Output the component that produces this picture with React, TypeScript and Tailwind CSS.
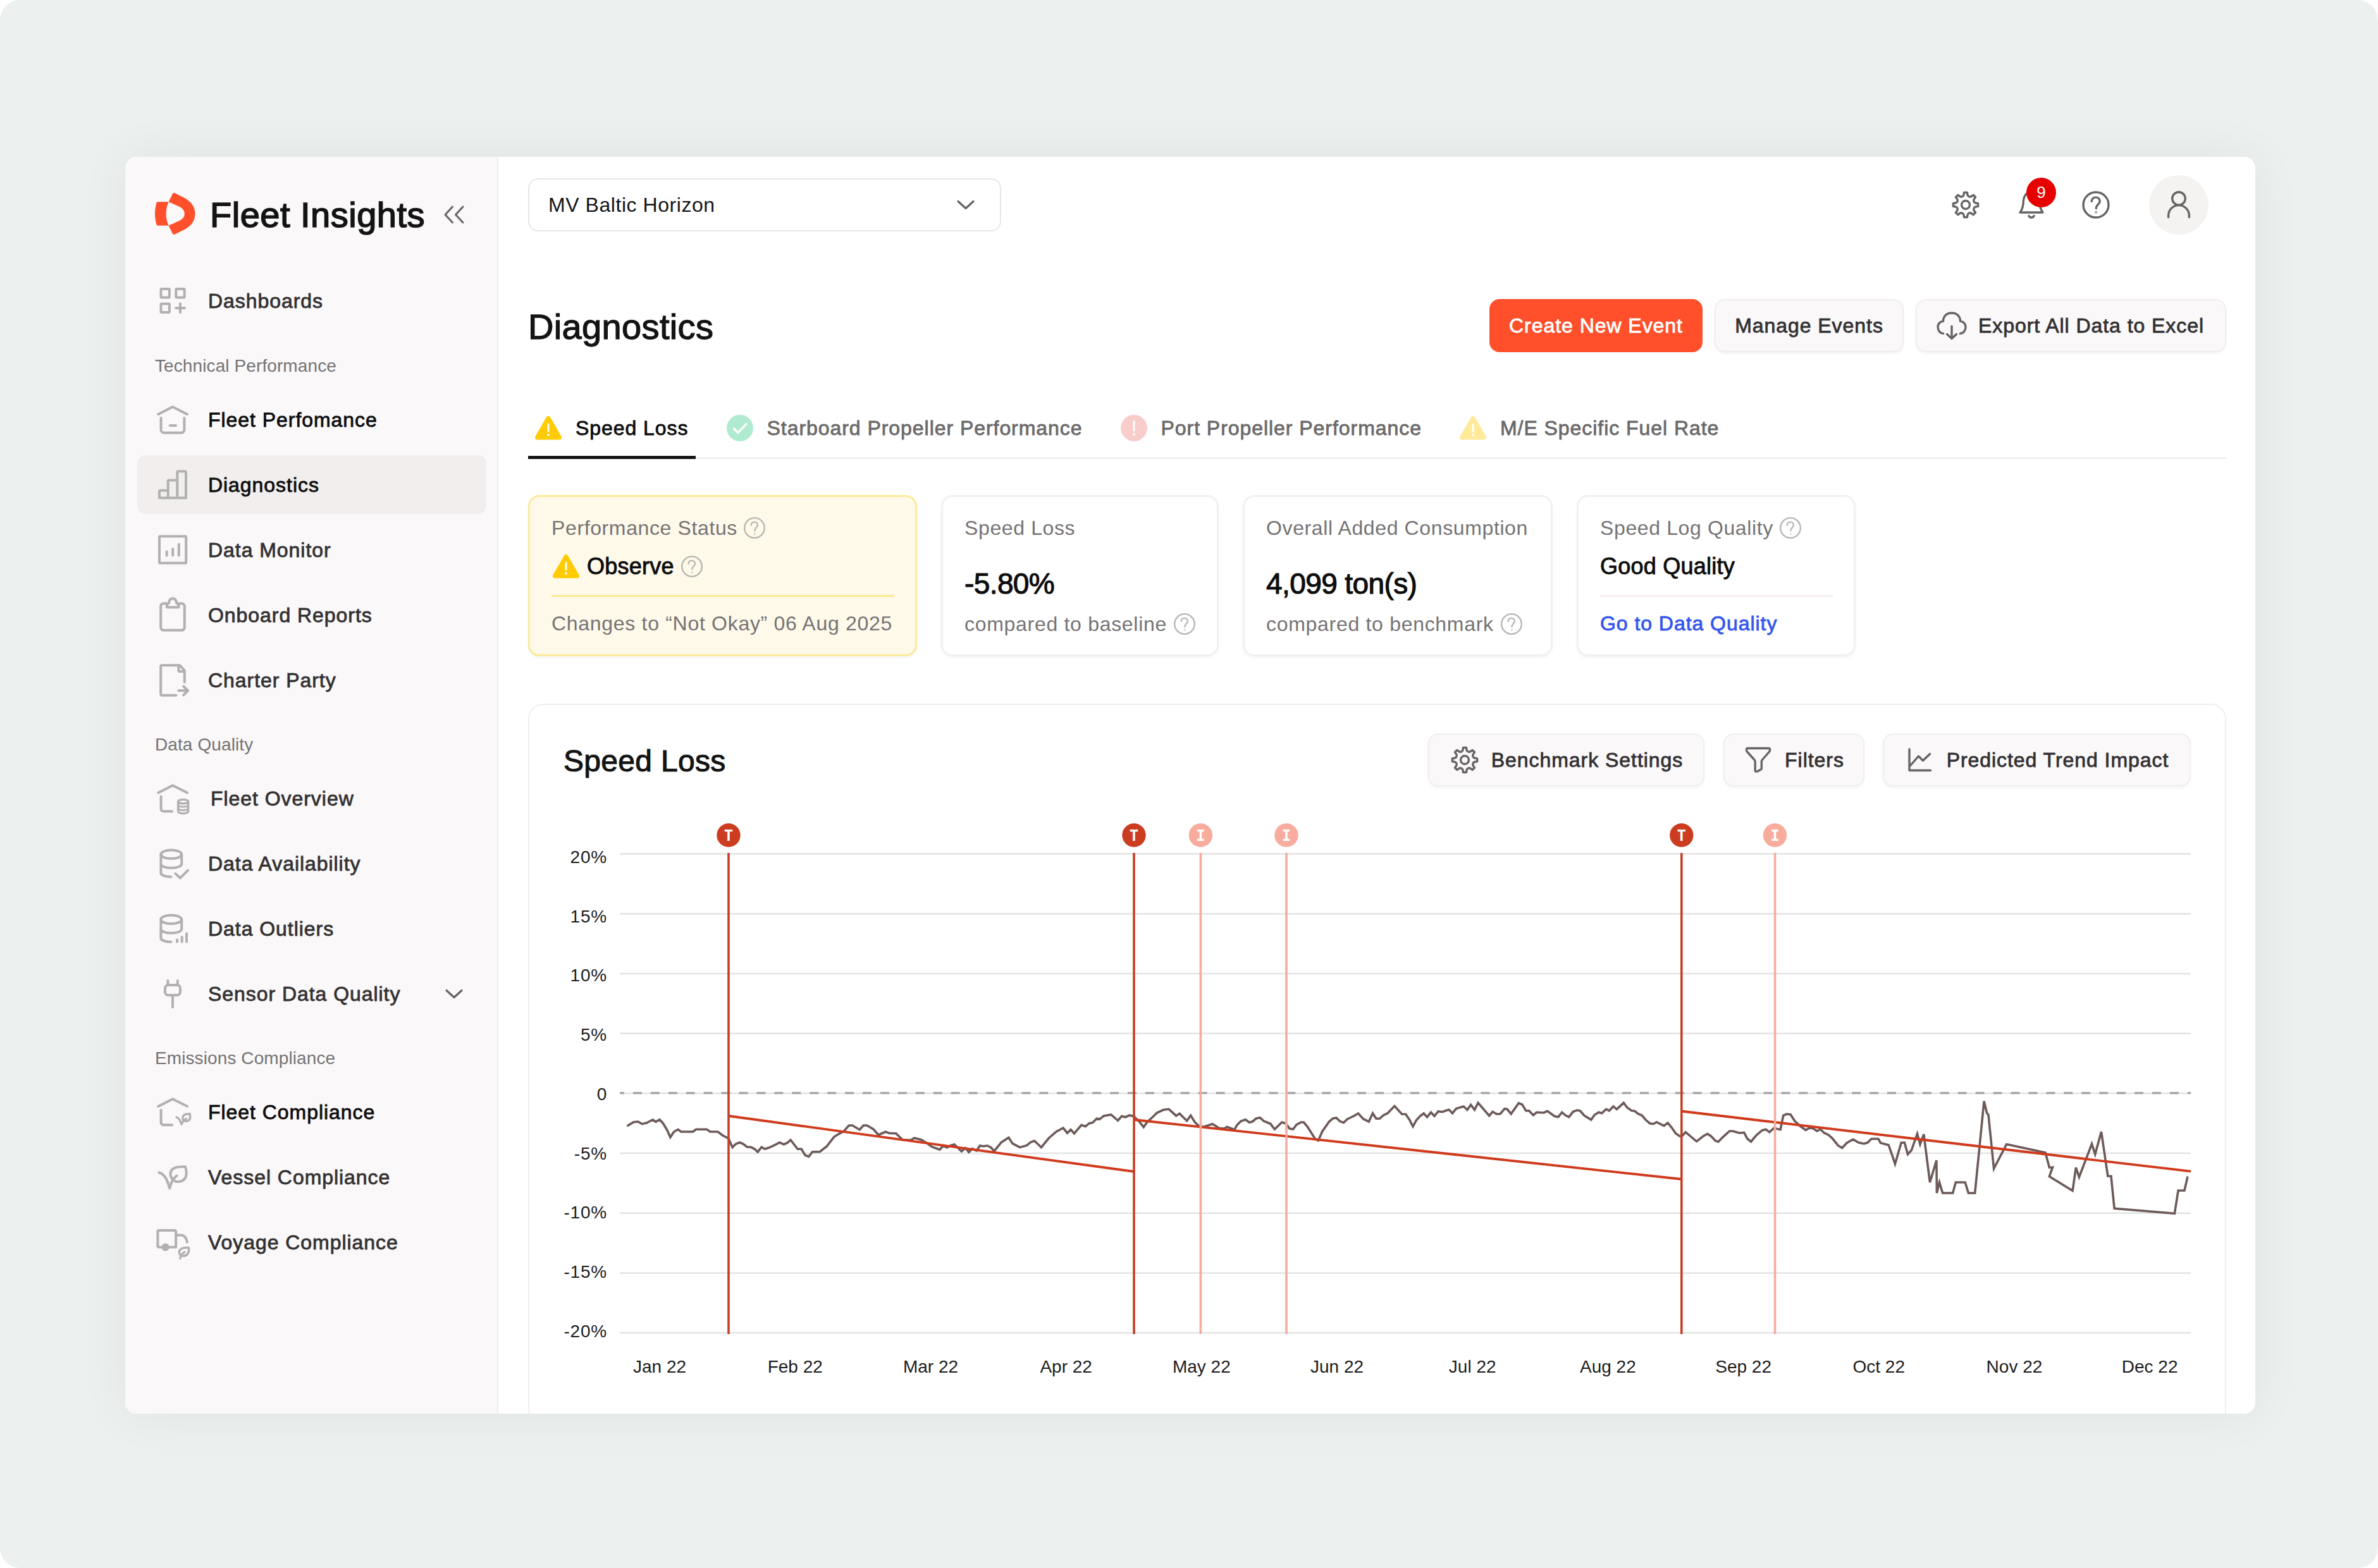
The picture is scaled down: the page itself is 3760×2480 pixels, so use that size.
import React from "react";

type IconProps = { className?: string };

/* ---------- text styles ---------- */

const medium = "[-webkit-text-stroke:0.8px] tracking-[0.95px] text-[32px]";
const regular = "text-[32px] tracking-[0.62px]";

/* ---------- sidebar icons ---------- */

function NavSvg({ children }: { children: React.ReactNode }) {
  return (
    <svg
      viewBox="0 0 64 64"
      className="h-[64px] w-[64px] shrink-0"
      fill="none"
      stroke="#b3b0b1"
      strokeWidth="4"
      strokeLinecap="round"
      strokeLinejoin="round"
    >
      {children}
    </svg>
  );
}

const DashboardsIcon = () => (
  <NavSvg>
    <rect x="13.5" y="13" width="13.4" height="13.4" rx="1" />
    <rect x="37.3" y="13" width="13.4" height="13.4" rx="1" />
    <rect x="13.5" y="36.6" width="13.4" height="13.4" rx="1" />
    <path d="M37.2 43.2H51M44 36.3V50.2" />
  </NavSvg>
);

const HouseIcon = () => (
  <NavSvg>
    <path d="M9.3 23.2L32 11.5L55 23.2" />
    <path d="M13.6 29V47.8a4.6 4.6 0 0 0 4.6 4.6H45.8a4.6 4.6 0 0 0 4.6-4.6V29" />
    <path d="M27.8 41H37" />
  </NavSvg>
);

const BarsIcon = () => (
  <NavSvg>
    <path d="M11 52.6V42.2a1.5 1.5 0 0 1 1.5-1.5H24.7M24.7 52V26a1.5 1.5 0 0 1 1.5-1.5H39.3M39.3 52V12a1.5 1.5 0 0 1 1.5-1.5H51.5a1.5 1.5 0 0 1 1.5 1.5V52.6H11" />
  </NavSvg>
);

const MonitorIcon = () => (
  <NavSvg>
    <rect x="11" y="10.3" width="42.2" height="42.2" rx="1" />
    <path d="M22.6 34.5V40.5M32.2 30V40.5M41.8 22.8V40.5" />
  </NavSvg>
);

const ClipboardIcon = () => (
  <NavSvg>
    <path d="M22.6 13.6H17.6a4.4 4.4 0 0 0-4.4 4.4V51.4a4.4 4.4 0 0 0 4.4 4.4H46.4a4.4 4.4 0 0 0 4.4-4.4V18a4.4 4.4 0 0 0-4.4-4.4H41.6" />
    <path d="M22.8 19.6V16.6c0-2 1.4-3.2 3.2-3.6c.6-4.900 2.600-7.400 6.100-7.400s5.500 2.500 6.100 7.400c1.800.4 3.200 1.600 3.200 3.600V19.600z" />
  </NavSvg>
);

const DocArrowIcon = () => (
  <NavSvg>
    <path d="M37.500 55.800H15a1.800 1.800 0 0 1-1.800-1.800V10.100a1.800 1.800 0 0 1 1.800-1.800H43.400L50.800 16.500V35" />
    <path d="M41.400 9.500V16a2 2 0 0 0 2 2H50" />
    <path d="M41.400 48.300H56M49.200 41.500L56.200 48.300L49.200 55.300" />
  </NavSvg>
);

const HouseDbIcon = () => (
  <NavSvg>
    <path d="M9.300 22.800L32 11.200L55 22.800" />
    <path d="M13.600 28.800V48.500a3.700 3.700 0 0 0 3.700 3.700H31" />
    <ellipse cx="48.600" cy="36.800" rx="8" ry="3.200" strokeWidth="3.400" />
    <path d="M40.600 36.800V52c0 2 3.600 3.600 8 3.600s8-1.600 8-3.600V36.800" strokeWidth="3.400" />
    <path d="M40.600 42c0 2 3.600 3.200 8 3.200s8-1.200 8-3.200M40.600 47.300c0 2 3.600 3.200 8 3.200s8-1.200 8-3.200" strokeWidth="2.800" />
  </NavSvg>
);

const DbBody = () => (
  <>
    <ellipse cx="29.800" cy="17.300" rx="16.400" ry="6.800" />
    <path d="M46.200 17.300V32.500c0 3.600-7 6.300-16.400 6.300s-16.400-2.700-16.400-6.300" />
    <path d="M13.400 17.300V46.500c0 3.400 6 6 16 6.300" />
  </>
);

const DbCheckIcon = () => (
  <NavSvg>
    <DbBody />
    <path d="M36.400 47.600L43.800 54.800L56 42.700" />
  </NavSvg>
);

const DbBarsIcon = () => (
  <NavSvg>
    <DbBody />
    <path d="M39 49.500V52.500M46.700 45V52.500M54 39.500V52.500" />
  </NavSvg>
);

const PlugIcon = () => (
  <NavSvg>
    <rect x="20" y="18" width="24" height="16" rx="5" />
    <path d="M24.400 11V17M39.800 11V17M32 34.500V53" />
  </NavSvg>
);

const HouseLeafIcon = () => (
  <NavSvg>
    <path d="M9.300 22.800L32 11.200L55 22.800" />
    <path d="M13.600 28.800V48.500a3.700 3.700 0 0 0 3.700 3.700H31" />
    <path d="M38 40C42 41.500 44.500 46 46 51.200C47.500 47 50 44 53.500 42.500" strokeWidth="3.400" />
    <path d="M59.200 34.800C53 34.500 48.500 36 47.800 40.500C47.500 44.500 51 47 55 46.200C59.500 45 60.500 41 59.200 34.800Z" strokeWidth="3.400" />
  </NavSvg>
);

const LeafIcon = () => (
  <NavSvg>
    <path d="M10.500 24.500C20 27 24 38 27.300 49.500C29 41 33 34 38.500 29.500" />
    <path d="M52 15.300C42 15 33 16 29.800 21.500C26.500 28 30 35.500 36 38.300C43 40.500 49.500 38 52.500 32C54.300 27.500 53.600 20.500 52 15.300Z" />
  </NavSvg>
);

const TruckLeafIcon = () => (
  <NavSvg>
    <path d="M15 39.400H10a1.600 1.600 0 0 1-1.600-1.600V14.700A1.600 1.600 0 0 1 10 13.100H35.500A1.600 1.600 0 0 1 37.100 14.700V39.400H26" />
    <path d="M37.500 20.500H45.500C51.500 20.500 53.500 25.500 55 31.500" />
    <circle cx="20.600" cy="39.600" r="4.200" fill="#b3b0b1" />
    <path d="M57.300 40.300C50 39.800 43.500 41.500 42.300 46.500C41.800 51 45.500 54 50 53.500C56 52.300 58.500 47.500 57.300 40.300ZM43.800 57.500C45 52.500 47.500 49 51 47.300" strokeWidth="3.400" />
  </NavSvg>
);

/* ---------- line icons ---------- */

function LineSvg({
  children,
  className = "",
  width = 3.4,
}: {
  children: React.ReactNode;
  className?: string;
  width?: number;
}) {
  return (
    <svg
      viewBox="-24 -24 48 48"
      className={`h-[48px] w-[48px] shrink-0 overflow-visible ${className}`}
      fill="none"
      stroke="#666464"
      strokeWidth={width}
      strokeLinecap="round"
      strokeLinejoin="round"
    >
      {children}
    </svg>
  );
}

/** Eight-tooth cog outline; valleys are quadratic curves between tooth bases. */
function cogPath() {
  const at = (deg: number, r: number) => {
    const a = (deg * Math.PI) / 180;
    return `${(Math.sin(a) * r).toFixed(2)} ${(-Math.cos(a) * r).toFixed(2)}`;
  };
  let d = "";
  for (let k = 0; k < 8; k++) {
    const a = k * 45;
    d += `${k === 0 ? "M" : "L"}${at(a - 7, 19.8)}L${at(a + 7, 19.8)}L${at(a + 10.5, 16.2)}`;
    d += `Q${at(a + 22.5, 12.2)} ${at(a + 34.5, 16.2)}`;
  }
  return d + "Z";
}

const COG = cogPath();

const GearIcon = () => (
  <LineSvg>
    <path d={COG} />
    <circle r="6.500" />
  </LineSvg>
);

const BellIcon = () => (
  <LineSvg>
    <path d="M-18 12C-14 6.500-13 2-12.800-4C-12.500-15-7-20.500 0-20.500S12.500-15 12.800-4C13 2 14 6.500 18 12Z" />
    <path d="M-4 17.500C-3 20.800 3 20.800 4 17.500" />
  </LineSvg>
);

const HelpGlyph = () => (
  <>
    <circle r="20" />
    <path d="M-6.800-5.500C-6.800-14.200 6.200-13.800 6.200-5.500C6.200-1 .3-.5.300 5.500" />
    <circle cx=".3" cy="11.700" r=".4" />
  </>
);

const HelpIcon = () => (
  <LineSvg>
    <HelpGlyph />
  </LineSvg>
);

const SmallHelp = ({ className = "" }: IconProps) => (
  <svg
    viewBox="-21.500 -21.500 43 43"
    className={`h-[34px] w-[34px] shrink-0 ${className}`}
    fill="none"
    stroke="#b9b6b3"
    strokeWidth="3"
    strokeLinecap="round"
  >
    <HelpGlyph />
  </svg>
);

const UserIcon = () => (
  <LineSvg>
    <circle cy="-10" r="10.300" />
    <path d="M-16.400 19.500V17A16.400 16.400 0 0 1 16.400 17V19.500" />
  </LineSvg>
);

const CloudDownIcon = () => (
  <LineSvg className="-ml-[2px]">
    <path d="M-13.500 12.500C-19 12-22 7-22 2C-22-3-18-6.800-13.500-7C-13.500-15-8-20 0-20S13.500-15 13.500-7C18-6.800 22-3 22 2C22 7 19 12 13.500 12.500" />
    <path d="M0 1V20M-7.500 13.500L0 20.500L7.500 13.500" />
  </LineSvg>
);

const FunnelIcon = () => (
  <LineSvg>
    <path d="M-16.500-18.500H16.500C19-18.500 19.200-15 17.500-13L6.500-.5C5.500.7 5.300 1.500 5.300 3V13.500C5.300 15.500-4.800 20.500-4.800 17V3C-4.800 1.500-5.200.7-6.200-.5L-17.500-13C-19.200-15-19-18.500-16.500-18.500Z" />
  </LineSvg>
);

const TrendIcon = () => (
  <LineSvg>
    <path d="M-17-17V16.500H16.500M-17 10.500L-2.500-6L4.500 1L15.500-9.500" />
  </LineSvg>
);

const ChevronDown = () => (
  <LineSvg width={3.2}>
    <path d="M-12-5.500L0 5.500L12-5.500" />
  </LineSvg>
);

const CollapseIcon = () => (
  <LineSvg width={3}>
    <path d="M-2.500-12L-14 0.500L-2.500 13M14-12L2.500 0.500L14 13" />
  </LineSvg>
);

/* ---------- status icons ---------- */

const WarnIcon = ({ className = "" }: IconProps) => (
  <svg viewBox="0 0 48 48" className={`h-[48px] w-[48px] shrink-0 ${className}`}>
    <path
      d="M24 8.500L41.500 39H6.500Z"
      fill="#ffcb05"
      stroke="#ffcb05"
      strokeWidth="7"
      strokeLinejoin="round"
    />
    <path d="M24 18V29" stroke="#fff" strokeWidth="3" strokeLinecap="round" />
    <circle cx="24" cy="34.800" r="1.900" fill="#fff" />
  </svg>
);

const OkIcon = () => (
  <svg viewBox="0 0 48 48" className="h-[48px] w-[48px] shrink-0">
    <circle cx="24" cy="24" r="21" fill="#b0ebcf" />
    <path
      d="M14.500 25L21 31.500L34 17.500"
      fill="none"
      stroke="#fff"
      strokeWidth="3.200"
      strokeLinecap="round"
      strokeLinejoin="round"
    />
  </svg>
);

const AlertIcon = () => (
  <svg viewBox="0 0 48 48" className="h-[48px] w-[48px] shrink-0">
    <circle cx="24" cy="24" r="21" fill="#facdcd" />
    <path d="M24 13.500V28" stroke="#fff" strokeWidth="3" strokeLinecap="round" />
    <circle cx="24" cy="34" r="1.900" fill="#fff" />
  </svg>
);

const Logo = () => (
  <svg viewBox="0 0 64 66" className="h-[66px] w-[64px] shrink-0" fill="#ff4f2b">
    <path d="M4.200 14.200H21.600C16.300 26 16.300 40 21.600 51.800H4.200Q3 51.800 2.500 50.500C-.8 38 -.8 28 2.500 15.500Q3 14.200 4.200 14.200Z" />
    <path d="M28 1.200Q29.300-.6 31.500.4L45.700 7.500C57 13.500 63.500 22 63.500 33S57.500 52.500 45.700 58.500L31.500 65.600Q29.300 66.600 28 64.800L21.600 51.800L39 44C43.500 41.500 46.800 38 46.800 33S43.500 24.500 39 22L21.600 14.200Z" />
  </svg>
);

/* ---------- sidebar ---------- */

type NavItemProps = {
  icon: React.ReactNode;
  label: string;
  tone?: "dark" | "normal";
  active?: boolean;
  chevron?: boolean;
  inset?: boolean;
};

function NavItem({ icon, label, tone = "normal", active, chevron, inset }: NavItemProps) {
  return (
    <div className="flex h-[102.9px] items-center">
      <div
        className={`flex h-[93px] w-[552px] items-center rounded-[14px] pl-[24px] ${
          active ? "bg-[#f1eeed]" : ""
        }`}
      >
        {icon}
        <span
          className={`whitespace-nowrap ${medium} ${inset ? "ml-[28px]" : "ml-[24px]"} ${
            tone === "dark" ? "text-[#0d0d0d]" : "text-[#333132]"
          }`}
        >
          {label}
        </span>
        {chevron && (
          <span className="mr-[27px] ml-auto flex">
            <ChevronDown />
          </span>
        )}
      </div>
    </div>
  );
}

const NavLabel = ({ children }: { children: string }) => (
  <div className="flex h-[84.700px] items-center pt-[17px] pl-[28px] text-[28px] tracking-[0.100px] text-[#757374]">
    {children}
  </div>
);

function Sidebar() {
  return (
    <aside className="flex w-[590px] shrink-0 flex-col border-r-2 border-[#eeeced] bg-[#faf8f9] pl-[19px]">
      <div className="flex h-[177px] items-center pt-[3px] pl-[28px]">
        <Logo />
        <span className="ml-[23px] whitespace-nowrap pt-[4px] text-[56px] leading-none tracking-[0.500px] text-[#141414] [-webkit-text-stroke:1.600px]">
          Fleet Insights
        </span>
        <span className="mt-[2px] ml-[22px] flex">
          <CollapseIcon />
        </span>
      </div>
      <nav className="flex flex-col">
        <NavItem icon={<DashboardsIcon />} label="Dashboards" />
        <NavLabel>Technical Performance</NavLabel>
        <NavItem icon={<HouseIcon />} label="Fleet Perfomance" tone="dark" />
        <NavItem icon={<BarsIcon />} label="Diagnostics" active tone="dark" />
        <NavItem icon={<MonitorIcon />} label="Data Monitor" />
        <NavItem icon={<ClipboardIcon />} label="Onboard Reports" />
        <NavItem icon={<DocArrowIcon />} label="Charter Party" />
        <NavLabel>Data Quality</NavLabel>
        <NavItem icon={<HouseDbIcon />} label="Fleet Overview" inset />
        <NavItem icon={<DbCheckIcon />} label="Data Availability" />
        <NavItem icon={<DbBarsIcon />} label="Data Outliers" />
        <NavItem icon={<PlugIcon />} label="Sensor Data Quality" chevron />
        <NavLabel>Emissions Compliance</NavLabel>
        <NavItem icon={<HouseLeafIcon />} label="Fleet Compliance" tone="dark" />
        <NavItem icon={<LeafIcon />} label="Vessel Compliance" />
        <NavItem icon={<TruckLeafIcon />} label="Voyage Compliance" />
      </nav>
    </aside>
  );
}

/* ---------- top bar, title, tabs ---------- */

function TopBar() {
  return (
    <header className="flex h-[151px] shrink-0 items-center justify-between">
      <button className="flex h-[84px] w-[748px] items-center justify-between rounded-[16px] border-2 border-[#e8e6e5] pr-[30px] pl-[30px]">
        <span className="text-[32px] tracking-[0.550px] text-[#141414]">MV Baltic Horizon</span>
        <ChevronDown />
      </button>
      <div className="flex items-center pr-[28px]">
        <GearIcon />
        <div className="relative ml-[56px] flex">
          <BellIcon />
          <span className="absolute -top-[19px] left-[16px] flex h-[47px] w-[47px] items-center justify-center rounded-full bg-[#e60000] text-[26px] text-white">
            9
          </span>
        </div>
        <div className="ml-[54px] flex">
          <HelpIcon />
        </div>
        <div className="ml-[60px] flex h-[94px] w-[94px] items-center justify-center rounded-full bg-[#f4f3f2]">
          <UserIcon />
        </div>
      </div>
    </header>
  );
}

function Button({
  icon,
  label,
  width,
  primary,
}: {
  icon?: React.ReactNode;
  label: string;
  width: string;
  primary?: boolean;
}) {
  return (
    <button
      className={`flex h-[84px] items-center justify-center gap-[18px] rounded-[16px] whitespace-nowrap ${medium} ${width} ${
        primary
          ? "bg-[#ff4f2b] text-white"
          : "border-2 border-[#f1eeee] bg-[#faf8f9] text-[#333132] shadow-[0_3px_4px_rgba(0,0,0,0.040)]"
      }`}
    >
      {icon}
      <span>{label}</span>
    </button>
  );
}

function Tab({ icon, label, active }: { icon: React.ReactNode; label: string; active?: boolean }) {
  return (
    <div
      className={`relative flex h-[98px] items-center gap-[19px] pr-[11px] pl-[8px] whitespace-nowrap ${medium} ${
        active ? "text-[#0d0d0d]" : "text-[#6b696a]"
      }`}
    >
      {icon}
      <span>{label}</span>
      {active && <span className="absolute bottom-0 left-0 h-[5px] w-full bg-[#141414]" />}
    </div>
  );
}

/* ---------- KPI cards ---------- */

function Card({
  width,
  warn,
  children,
}: {
  width: string;
  warn?: boolean;
  children: React.ReactNode;
}) {
  return (
    <div
      className={`flex h-[255px] flex-col rounded-[18px] pt-[22px] pr-[36px] pl-[37px] shadow-[0_3px_4px_rgba(0,0,0,0.040)] ring-[3px] ring-inset ${width} ${
        warn ? "bg-[#fff9ea] ring-[#fdea9a]" : "bg-white ring-[#f3f0f1]"
      }`}
    >
      {children}
    </div>
  );
}

const CardLabel = ({ children }: { children: React.ReactNode }) => (
  <div className={`flex h-[60px] shrink-0 items-center gap-[10px] whitespace-nowrap text-[#757374] ${regular}`}>
    {children}
  </div>
);

const CardStatus = ({ children }: { children: React.ReactNode }) => (
  <div className="flex h-[62px] shrink-0 items-center whitespace-nowrap text-[36px] tracking-[0.250px] text-[#0d0d0d] [-webkit-text-stroke:0.900px]">
    {children}
  </div>
);

const CardValue = ({ children }: { children: React.ReactNode }) => (
  <div className="mt-[12px] flex h-[92px] shrink-0 items-center whitespace-nowrap text-[46px] tracking-[-0.600px] text-[#0d0d0d] [-webkit-text-stroke:1.100px]">
    {children}
  </div>
);

const CardNote = ({ children }: { children: React.ReactNode }) => (
  <div className="flex h-[35px] items-center gap-[11px] whitespace-nowrap text-[32px] tracking-[0.700px] text-[#757374]">
    {children}
  </div>
);

function Cards() {
  return (
    <div className="mt-[57px] flex gap-[38px]">
      <Card width="w-[615px]" warn>
        <CardLabel>
          Performance Status <SmallHelp />
        </CardLabel>
        <CardStatus>
          <WarnIcon className="-ml-[1px]" />
          <span className="ml-[9px]">Observe</span>
          <SmallHelp className="ml-[11px]" />
        </CardStatus>
        <div className="mt-[14px] h-[3px] shrink-0 bg-[#fdea8d]" />
        <div className="flex h-[84px] items-center whitespace-nowrap text-[32px] tracking-[0.700px] text-[#757374]">
          Changes to “Not Okay” 06 Aug 2025
        </div>
      </Card>
      <Card width="w-[439px]">
        <CardLabel>Speed Loss</CardLabel>
        <CardValue>-5.80%</CardValue>
        <CardNote>
          compared to baseline <SmallHelp />
        </CardNote>
      </Card>
      <Card width="w-[490px]">
        <CardLabel>Overall Added Consumption</CardLabel>
        <CardValue>4,099 ton(s)</CardValue>
        <CardNote>
          compared to benchmark <SmallHelp />
        </CardNote>
      </Card>
      <Card width="w-[441px]">
        <CardLabel>
          Speed Log Quality <SmallHelp />
        </CardLabel>
        <CardStatus>Good Quality</CardStatus>
        <div className="mt-[14px] h-[3px] shrink-0 bg-[#f5eeee]" />
        <div className={`flex h-[84px] items-center whitespace-nowrap text-[#3355ee] ${medium}`}>
          Go to Data Quality
        </div>
      </Card>
    </div>
  );
}

/* ---------- chart ---------- */

const Y_LABELS = ["20%", "15%", "10%", "5%", "0", "-5%", "-10%", "-15%", "-20%"];
const MONTHS = ["Jan", "Feb", "Mar", "Apr", "May", "Jun", "Jul", "Aug", "Sep", "Oct", "Nov", "Dec"];

const EVENTS: { x: number; kind: "T" | "I" }[] = [
  { x: 172, kind: "T" },
  { x: 813, kind: "T" },
  { x: 918.4, kind: "I" },
  { x: 1054, kind: "I" },
  { x: 1678.8, kind: "T" },
  { x: 1826.5, kind: "I" },
];

const TRENDS: [number, number, number, number][] = [
  [172, 469, 813, 557],
  [813, 475, 1678.8, 569],
  [1678.8, 461.5, 2484, 556.7],
];

const PERIODS = [
  {
    dx: -120,
    scale: 0.60587,
    points:
      "217,423 234,404 246,402 256,413 268,408 284,393 292,403 302,392 311,410 321,440 330,476 339,451 350,439 358,450 389,450 397,439 425,439 434,450 454,450 467,468 479,479 482,482 492,524 501,508 511,501 520,508 530,522 540,523 550,532 558,546 568,523 577,532 587,526 604,512 615,501 626,510 635,503 644,489 662,532 672,532 682,562 691,568 701,545 720,545 738,520 757,475 770,460 783,447 796,420 805,420 824,440 834,420 843,420 860,438 873,465 892,450 901,457 919,458 936,488 957,490 967,480 985,488 1000,505 1013,522 1033,535 1042,517 1052,525 1062,515 1071,510 1090,543 1100,527 1109,547 1118,530 1129,540 1138,516 1147,519 1157,516 1167,525 1175,542 1194,500 1213,478 1223,506 1242,524 1260,515 1270,500 1280,493 1298,524 1318,480 1337,450 1355,432 1366,456 1375,440 1384,458 1403,418 1413,425 1423,410 1432,407 1443,387 1450,391 1461,375 1480,369 1498,397 1508,376 1517,381 1528,372 1540,377",
  },
  {
    dx: 770,
    scale: 0.60587,
    points:
      "71,378 84,400 96,428 105,405 118,383 131,360 148,346 162,343 181,374 190,364 209,398 219,373 230,405 243,427 255,425 276,413 293,433 306,435 314,427 333,440 340,418 350,400 362,392 372,406 380,402 390,387 400,383 410,400 427,412 438,438 457,405 467,410 477,435 486,438 495,417 507,405 514,405 524,427 543,482 552,492 562,450 580,403 590,387 599,384 608,400 618,407 628,390 645,375 656,363 670,390 684,402 694,362 703,388 712,388 722,372 733,362 751,328 770,366 780,367 790,393 799,425 808,395 818,375 827,363 836,380 846,358 855,376 865,353 875,356 893,345 902,362 912,340 931,330 941,346 950,322 960,346 969,313 998,374 1007,355 1017,366 1027,365 1038,341 1045,343 1055,365 1075,314 1084,321 1094,350 1102,350 1113,371 1122,358 1140,360 1150,352 1168,376 1178,380 1188,358 1197,372 1206,380 1217,355 1227,348 1235,350 1246,373 1264,393 1273,370 1284,358 1292,362 1303,343 1311,350 1322,330 1331,343 1349,313 1358,335 1370,350 1377,351 1387,365 1397,373 1406,393 1417,410 1426,413 1435,404 1454,422 1464,408 1474,430 1485,458 1495,471 1500,471",
  },
  {
    dx: 1660,
    scale: 0.57398,
    points:
      "33,472 44,452 74,496 92,472 104,460 114,471 126,493 134,498 145,478 165,447 174,447 192,456 205,454 214,483 224,497 238,468 255,443 265,439 275,452 287,433 305,440 313,373 322,366 333,368 345,400 360,424 375,442 385,432 395,434 406,447 415,438 426,456 437,464 448,481 464,515 475,527 488,503 505,486 520,501 535,507 545,502 556,484 575,484 581,503 603,513 612,557 621,603 638,502 647,502 656,557 666,538 682,460 690,510 700,462 717,690 735,586 736,741 743,690 752,741 780,741 788,690 814,690 823,741 841,741 866,305 874,362 878,370 893,625 928,509 1035,549 1046,620 1055,619 1046,662 1110,730 1119,620 1128,665 1163,508 1172,557 1189,450 1207,660 1216,661 1225,814 1391,838 1401,729 1418,729 1427,662",
  },
];

const SERIES = PERIODS.map(({ dx, scale, points }) =>
  points
    .split(" ")
    .map((p) => {
      const [x, y] = p.split(",").map(Number);
      return `${(dx + x * scale).toFixed(1)},${(344 + y / 3).toFixed(1)}`;
    })
    .join(" "),
).join(" ");

function Plot() {
  return (
    <svg viewBox="0 0 2484 824" className="h-[824px] w-[2484px] overflow-visible" fill="none">
      {Y_LABELS.map((l, i) => (
        <path key={l} d={`M0 ${54.5 + i * 94.7}H2484`} stroke="#e4e3e3" strokeWidth="2.500" />
      ))}
      <path d="M0 432.700H2484" stroke="#a9a7a7" strokeWidth="3.600" strokeDasharray="14 13.930" strokeDashoffset="7" />
      <polyline points={SERIES} stroke="#6d5a59" strokeWidth="3.600" strokeLinejoin="miter" />
      {TRENDS.map(([x1, y1, x2, y2]) => (
        <path key={x1} d={`M${x1} ${y1}L${x2} ${y2}`} stroke="#d03a1c" strokeWidth="3.800" />
      ))}
      {EVENTS.map(({ x, kind }) => (
        <g key={x}>
          <path d={`M${x} 53V814`} stroke={kind === "T" ? "#c63d24" : "#f5ac9f"} strokeWidth="3.600" />
          <circle cx={x} cy="25" r="18.700" fill={kind === "T" ? "#cc3c20" : "#f8ac9e"} />
          <text
            x={x}
            y="33.500"
            textAnchor="middle"
            fill="#fff"
            className="font-['DejaVu_Sans_Mono',monospace] text-[24px] font-bold"
          >
            {kind}
          </text>
        </g>
      ))}
    </svg>
  );
}

function ChartCard() {
  return (
    <section className="mt-[75px] flex h-[1200px] shrink-0 flex-col rounded-[24px] border-2 border-[#f1eeee] pr-[54px] pl-[54px]">
      <div className="mt-[45px] flex h-[84px] items-center justify-between">
        <h2 className="whitespace-nowrap pt-[4px] text-[48px] tracking-[0.300px] text-[#141414] [-webkit-text-stroke:1.100px]">
          Speed Loss
        </h2>
        <div className="flex gap-[29.500px]">
          <Button width="w-[437px]" icon={<GearIcon />} label="Benchmark Settings" />
          <Button width="w-[223px]" icon={<FunnelIcon />} label="Filters" />
          <Button width="w-[487px]" icon={<TrendIcon />} label="Predicted Trend Impact" />
        </div>
      </div>
      <div className="mt-[52px] flex justify-between">
        <div className="flex w-[69px] flex-col items-end pt-[13px] text-[28px] tracking-[0.800px] text-[#1c1c1c]">
          {Y_LABELS.map((l) => (
            <span key={l} className="flex h-[93.750px] items-center whitespace-nowrap">
              {l}
            </span>
          ))}
        </div>
        <Plot />
      </div>
      <div className="-mt-[33px] ml-[45px] flex text-[28px] text-[#1c1c1c]">
        {MONTHS.map((m) => (
          <span key={m} className="flex h-[84px] w-[214.200px] shrink-0 items-center justify-center whitespace-nowrap">
            {m} 22
          </span>
        ))}
      </div>
    </section>
  );
}

export default function App() {
  return (
    <div className="h-[2480px] w-[3760px] overflow-hidden bg-white">
      <div className="h-full w-full rounded-[32px] bg-[#ecf0ef] px-[198px] pt-[248px] font-['Liberation_Sans',Arial,sans-serif]">
        <div className="h-[1988px] w-[3368px] rounded-[18px] shadow-[0_0_80px_rgba(0,0,0,0.060)]">
          <div className="flex h-full w-full overflow-hidden rounded-[18px] bg-white">
            <Sidebar />
            <main className="flex min-w-0 flex-1 flex-col overflow-hidden pr-[46px] pl-[47px]">
              <TopBar />
              <div className="mt-[74px] flex h-[84px] shrink-0 items-center justify-between">
                <h1 className="whitespace-nowrap pt-[3px] text-[56px] leading-none tracking-[0.350px] text-[#141414] [-webkit-text-stroke:1.300px]">
                  Diagnostics
                </h1>
                <div className="flex gap-[19px]">
                  <Button width="w-[337px]" label="Create New Event" primary />
                  <Button width="w-[299px]" label="Manage Events" />
                  <Button width="w-[491px]" icon={<CloudDownIcon />} label="Export All Data to Excel" />
                </div>
              </div>
              <div className="mt-[71px] flex h-[98px] shrink-0 gap-[38px] shadow-[inset_0_-2.500px_0_#efeded]">
                <Tab icon={<WarnIcon />} label="Speed Loss" active />
                <Tab icon={<OkIcon />} label="Starboard Propeller Performance" />
                <Tab icon={<AlertIcon />} label="Port Propeller Performance" />
                <Tab icon={<WarnIcon className="opacity-40" />} label="M/E Specific Fuel Rate" />
              </div>
              <Cards />
              <ChartCard />
            </main>
          </div>
        </div>
      </div>
    </div>
  );
}
